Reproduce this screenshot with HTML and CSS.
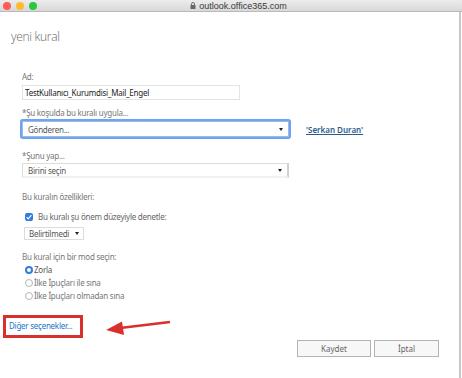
FILE: index.html
```html
<!DOCTYPE html>
<html lang="tr">
<head>
    <meta charset="UTF-8">
    <title>yeni kural</title>
    <link rel="stylesheet" href="styles.css">
</head>
<body>
    <header class="titlebar">
        <div class="lights">
            <span class="light red"></span>
            <span class="light yellow"></span>
            <span class="light green"></span>
        </div>
        <div class="address">
            <svg class="lock" width="6" height="7" viewBox="0 0 6 7"><path d="M1.5 3V2a1.5 1.5 0 0 1 3 0v1" fill="none" stroke="#666" stroke-width="0.9"/><rect x="0.5" y="3" width="5" height="4" rx="0.6" fill="#666"/></svg>
            <span>outlook.office365.com</span>
        </div>
    </header>

    <main class="dialog">
        <h1 class="title">yeni kural</h1>

        <div class="form">
            <label class="field-label label-name">Ad:</label>
            <input class="text-input" type="text" value="TestKullanıcı_Kurumdisi_Mail_Engel">

            <label class="field-label label-cond">*Şu koşulda bu kuralı uygula...</label>
            <div class="cond-row">
                <div class="select select-focus">
                    <span>Gönderen...</span>
                    <span class="caret"></span>
                </div>
                <a class="sender-link" href="#">'Serkan Duran'</a>
            </div>

            <label class="field-label label-do">*Şunu yap...</label>
            <div class="select select-action">
                <span>Birini seçin</span>
                <span class="caret"></span>
            </div>

            <p class="field-label label-props">Bu kuralın özellikleri:</p>
            <div class="check-row">
                <span class="checkbox">
                    <svg width="8" height="8" viewBox="0 0 8 8"><path d="M1.6 4.2l1.6 1.6 3.2-3.6" fill="none" stroke="#fff" stroke-width="1.2"/></svg>
                </span>
                <span>Bu kuralı şu önem düzeyiyle denetle:</span>
            </div>
            <div class="select select-small">
                <span>Belirtilmedi</span>
                <span class="caret"></span>
            </div>

            <p class="field-label label-mode">Bu kural için bir mod seçin:</p>
            <ul class="radios">
                <li><span class="radio checked"></span><span class="radio-text">Zorla</span></li>
                <li><span class="radio"></span>İlke İpuçları ile sına</li>
                <li><span class="radio"></span>İlke İpuçları olmadan sına</li>
            </ul>
        </div>

        <div class="more-box">
            <a class="more-link" href="#">Diğer seçenekler...</a>
        </div>

        <div class="actions">
            <button class="btn">Kaydet</button>
            <button class="btn btn-cancel">İptal</button>
        </div>

        <svg class="annotation" width="80" height="24" viewBox="0 0 80 24">
            <path d="M66 3L16 9" stroke="#d9302c" stroke-width="2.6" fill="none"/>
            <path d="M2 11L18 2.5L20 16Z" fill="#d9302c"/>
        </svg>
    </main>
</body>
</html>
```

FILE: styles.css
```css
* {
    margin: 0;
    padding: 0;
    box-sizing: border-box;
}

body {
    width: 462px;
    height: 378px;
    background: #fff;
    font-family: 'Noto Sans', sans-serif;
    font-size: 8px;
    letter-spacing: -0.25px;
    color: #555;
    overflow: hidden;
}

.titlebar {
    height: 12px;
    background: linear-gradient(#ececec, #d8d8d8);
    border-bottom: 1px solid #b9b9b9;
    display: flex;
    align-items: center;
}

.lights {
    display: flex;
    gap: 5px;
    padding-left: 3px;
}

.light {
    width: 8px;
    height: 8px;
    border-radius: 50%;
}

.red { background: #fc5b57; }
.yellow { background: #fdbc2e; }
.green { background: #28c840; }

.address {
    flex: 1;
    display: flex;
    justify-content: center;
    align-items: center;
    gap: 3px;
    font-family: 'Liberation Sans', sans-serif;
    font-size: 9px;
    letter-spacing: 0;
    color: #3a3a3a;
    margin-right: 22px;
}

.dialog {
    position: relative;
    height: 366px;
    border-right: 2px solid #c8c8c8;
    width: 461px;
}

.title {
    font-family: 'Open Sans', sans-serif;
    font-weight: 300;
    font-size: 12px;
    letter-spacing: -0.3px;
    line-height: 16px;
    color: #666;
    margin-left: 11px;
    padding-top: 17px;
}

.form {
    padding-left: 22px;
}

.field-label {
    display: block;
    line-height: 12px;
    color: #777;
}

.label-name { margin-top: 26px; }
.label-cond { margin-top: 7px; }
.label-do { margin-top: 13px; }
.label-props { margin-top: 13px; }
.label-mode { margin-top: 11px; }

.text-input {
    display: block;
    margin-top: 2px;
    width: 218px;
    height: 15px;
    border: 1px solid #e3e3e3;
    padding: 0 2px;
    font-family: 'Noto Sans', sans-serif;
    font-size: 8px;
    letter-spacing: -0.25px;
    color: #222;
    text-decoration: underline wavy #f2a0a0;
    text-decoration-thickness: 0.5px;
    outline: none;
}

.cond-row {
    display: flex;
    align-items: center;
    margin-top: 2px;
}

.select {
    display: flex;
    align-items: center;
    justify-content: space-between;
    border: 1px solid #dcdcdc;
    padding: 0 5px;
    color: #555;
    background: #fff;
}

.caret {
    width: 0;
    height: 0;
    border-left: 2.5px solid transparent;
    border-right: 2.5px solid transparent;
    border-top: 3px solid #222;
}

.select-focus {
    width: 267px;
    height: 16px;
    border-color: #9cbbe8;
    box-shadow: 0 0 0 2px #6fa3ef;
    border-radius: 1px;
}

.sender-link {
    margin-left: 17px;
    color: #2a5d8f;
    font-weight: 600;
    letter-spacing: 0;
    text-decoration: underline;
}

.select-action {
    width: 267px;
    height: 15px;
    margin-top: 1px;
    border-right: 2px solid #d0d0d0;
    border-bottom: 2px solid #eef1f5;
}

.check-row {
    display: flex;
    align-items: center;
    gap: 5px;
    line-height: 12px;
    margin-top: 8px;
    margin-left: 3px;
    color: #666;
}

.checkbox {
    width: 8px;
    height: 8px;
    border-radius: 2px;
    background: #2f7de1;
    display: flex;
}

.select-small {
    width: 60px;
    height: 13px;
    margin-top: 4px;
    margin-left: 2px;
    padding: 0 4px;
}

.radios {
    list-style: none;
    margin-left: 3px;
}

.radios li {
    display: flex;
    align-items: center;
    height: 13px;
    color: #777;
}

.radio {
    width: 8px;
    height: 8px;
    border-radius: 50%;
    border: 1px solid #b5b5b5;
    margin-right: 1px;
}

.radio.checked {
    border: 2.5px solid #2f7de1;
    background: #fff;
}

.radio-text {
    color: #555;
}

.more-box {
    margin: 13px 0 0 3px;
    width: 80px;
    height: 23px;
    border: 3px solid #d9302c;
    padding: 2px 0 0 3px;
}

.more-link {
    color: #1a73c8;
    text-decoration: none;
    line-height: 12px;
}

.actions {
    display: flex;
    justify-content: flex-end;
    gap: 3px;
    margin-top: 2px;
    padding-right: 20px;
}

.btn {
    height: 17px;
    width: 74px;
    background: #f7f7f7;
    border: 1px solid #b3b3b3;
    font-family: 'Noto Sans', sans-serif;
    font-size: 8px;
    color: #666;
}

.btn-cancel {
    width: 65px;
}

.annotation {
    position: absolute;
    left: 104px;
    top: 307px;
}
```
